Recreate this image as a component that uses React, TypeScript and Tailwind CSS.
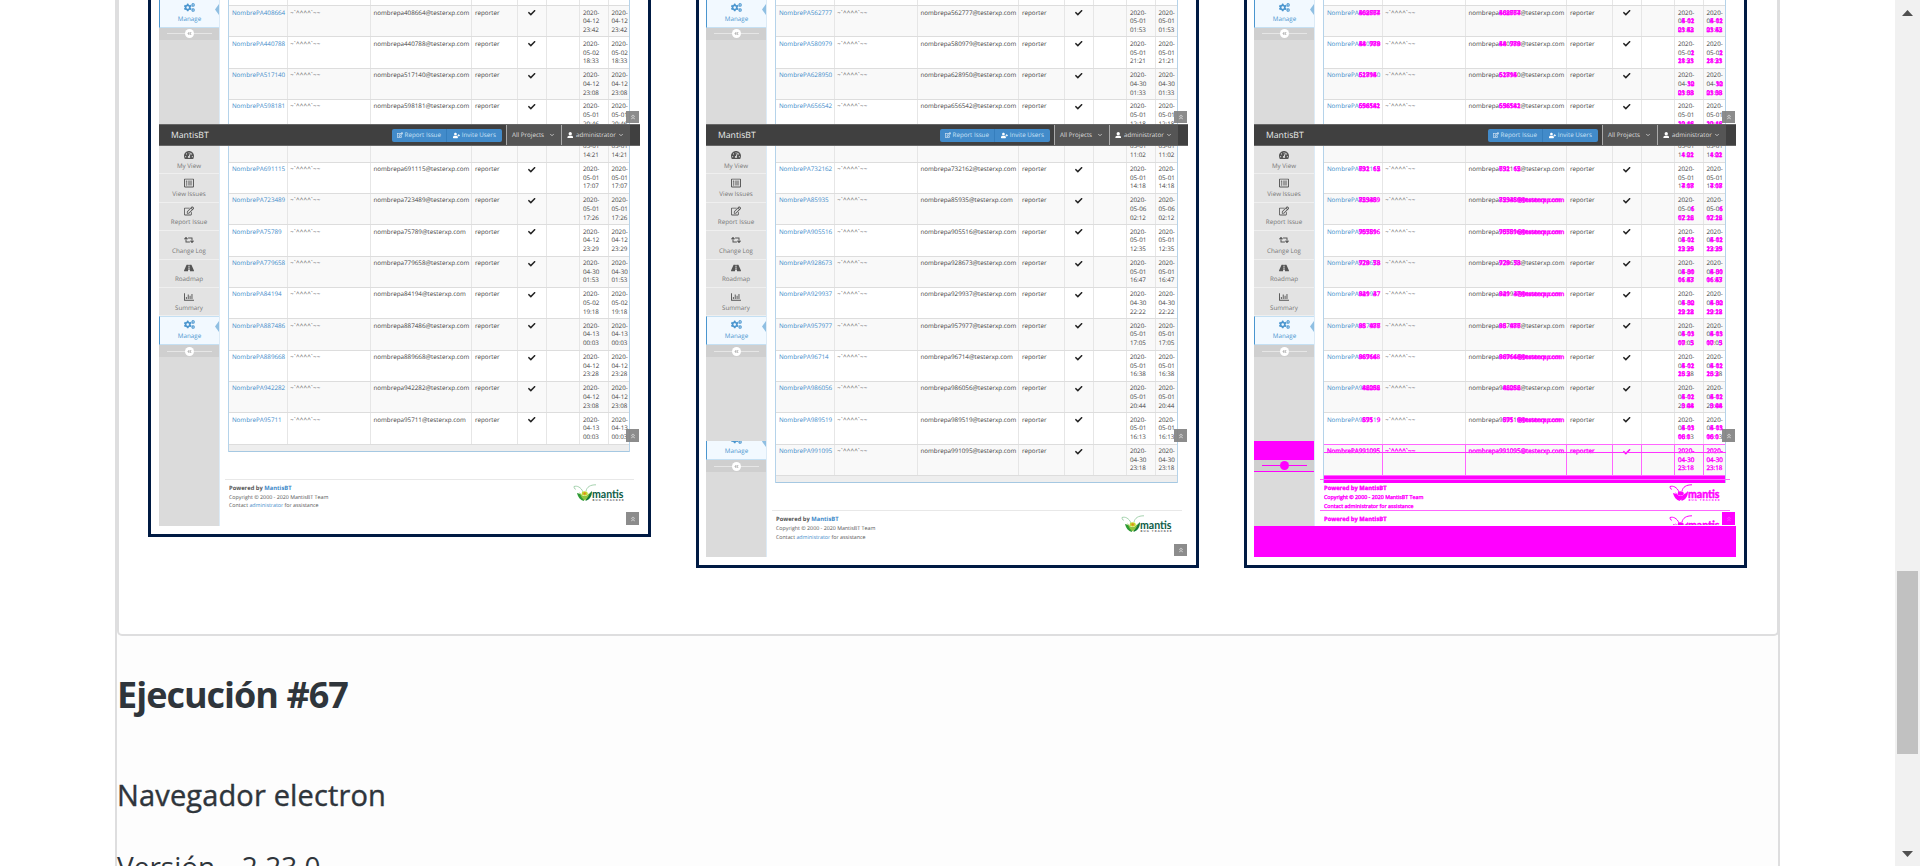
import React from "react";
import {
  FaTachometerAlt,
  FaRegListAlt,
  FaRegEdit,
  FaRetweet,
  FaRoad,
  FaRegChartBar,
  FaCogs,
  FaCheck,
  FaUser,
  FaUserPlus,
  FaAngleDoubleLeft,
  FaAngleDoubleUp,
} from "react-icons/fa";
import { FiChevronDown } from "react-icons/fi";

type Row = { id: string; day: string; time: string };

const r = (id: string, day: string, time: string): Row => ({ id, day, time });

const baseline: Row[] = [
  r("408664", "04-12", "23:42"),
  r("440788", "05-02", "18:33"),
  r("517140", "04-12", "23:08"),
  r("598181", "05-01", "20:46"),
  r("", "05-01", "14:21"),
  r("691115", "05-01", "17:07"),
  r("723489", "05-01", "17:26"),
  r("75789", "04-12", "23:29"),
  r("779658", "04-30", "01:53"),
  r("84194", "05-02", "19:18"),
  r("887486", "04-13", "00:03"),
  r("889668", "04-12", "23:28"),
  r("942282", "04-12", "23:08"),
  r("95711", "04-13", "00:03"),
];

const current: Row[] = [
  r("562777", "05-01", "01:53"),
  r("580979", "05-01", "21:21"),
  r("628950", "04-30", "01:33"),
  r("656542", "05-01", "12:18"),
  r("", "05-01", "11:02"),
  r("732162", "05-01", "14:18"),
  r("85935", "05-06", "02:12"),
  r("905516", "05-01", "12:35"),
  r("928673", "05-01", "16:47"),
  r("929937", "04-30", "22:22"),
  r("957977", "05-01", "17:05"),
  r("96714", "05-01", "16:38"),
  r("986056", "05-01", "20:44"),
  r("989519", "05-01", "16:13"),
  r("991095", "04-30", "23:18"),
];

const changedText = "text-[#ff00ff] [-webkit-text-stroke:0.35px_#ff00ff]";

/* Prints `b`; where `a` differs, both strings are printed in magenta on top of each other. */
function Diff({ a, b }: { a?: string; b: string }) {
  if (a === undefined || a === b) return <>{b}</>;
  const runs: { same: boolean; a: string; b: string }[] = [];
  const n = Math.max(a.length, b.length);
  for (let i = 0; i < n; i++) {
    const ca = a[i] ?? "";
    const cb = b[i] ?? "";
    const same = ca === cb;
    const last = runs[runs.length - 1];
    if (last && last.same === same) {
      last.a += ca;
      last.b += cb;
    } else runs.push({ same, a: ca, b: cb });
  }
  return (
    <>
      {runs.map((run, i) =>
        run.same ? (
          <span key={i}>{run.b}</span>
        ) : (
          <span key={i} className={"relative inline-block " + changedText}>
            {run.b}
            <span aria-hidden className="absolute left-0 top-0">
              {run.a}
            </span>
          </span>
        )
      )}
    </>
  );
}

function UserRow({ row, other, shade, added }: { row: Row; other?: Row; shade: boolean; added?: boolean }) {
  const cell = "border-r pt-[2.5px] " + (added ? "border-[#ff66ff] " : "border-[#e6e6e6] ");
  const dates = (
    <>
      <div>{row.id ? "2020-" : "\u00a0"}</div>
      <div>
        <Diff a={other?.day} b={row.day} />
      </div>
      <div>
        <Diff a={other?.time} b={row.time} />
      </div>
    </>
  );
  return (
    <div
      className={
        "grid h-[31.33px] shrink-0 grid-cols-[58.3px_83.8px_101px_45.7px_29px_33.3px_29px_1fr] overflow-hidden whitespace-nowrap border-t " +
        (shade ? "bg-[#f9f9f9] " : "bg-white ") +
        (added ? "border-[#ff66ff] " + changedText : "border-[#dddddd] text-[#444]")
      }
    >
      <div className={cell + "pl-[2.5px]" + (added ? "" : " text-[#428bca]")}>
        {row.id && <Diff a={other && "NombrePA" + other.id} b={"NombrePA" + row.id} />}
      </div>
      <div className={cell + "pl-[2.5px] tracking-[0.2px]"}>{row.id && "~`^^^^`~~"}</div>
      <div className={cell + "pl-[2px]"}>
        {row.id && (
          <Diff a={other && "nombrepa" + other.id + "@testerxp.com"} b={"nombrepa" + row.id + "@testerxp.com"} />
        )}
      </div>
      <div className={cell + "pl-[2.5px]"}>{row.id && "reporter"}</div>
      <div className={cell + "flex items-start justify-center pt-[3px]"}>
        {row.id && <FaCheck className={"size-[7.5px] " + (added ? "text-[#ff00ff]" : "text-[#222]")} />}
      </div>
      <div className={cell} />
      <div className={cell + "pl-[2.5px]"}>{dates}</div>
      <div className="pl-[2px] pt-[2.5px]">{dates}</div>
    </div>
  );
}

function Manage() {
  return (
    <div className="relative flex h-[28.5px] shrink-0 flex-col items-center overflow-hidden border-y border-l border-y-[#c5e0f3] border-l-[#4b96cf] bg-[#f2f9ff] pt-[2px] text-[#4b96cf]">
      <FaCogs className="size-[11px]" />
      <span className="mt-[1.5px]">Manage</span>
      <svg className="absolute right-0 top-[4px] h-[11px] w-[4px]" viewBox="0 0 4 11">
        <path d="M4 0 L0 5.5 L4 11 Z" fill="#8fbfe2" />
      </svg>
    </div>
  );
}

function Collapse({ changed }: { changed?: boolean }) {
  return (
    <div
      className={
        "flex h-[12.5px] shrink-0 items-center justify-center bg-[#cfcfcf] " +
        (changed ? "border-b border-[#ff00ff] text-[#ff00ff]" : "text-[#aaa]")
      }
    >
      <span className={"h-px w-[18px] " + (changed ? "bg-[#ff00ff]" : "bg-[#e6e6e6]")} />
      <span className={"flex size-[9px] items-center justify-center rounded-full " + (changed ? "bg-[#ff00ff]" : "bg-white")}>
        <FaAngleDoubleLeft className="size-[5px]" />
      </span>
      <span className={"h-px w-[18px] " + (changed ? "bg-[#ff00ff]" : "bg-[#e6e6e6]")} />
    </div>
  );
}

const menu = [
  { label: "My View", Icon: FaTachometerAlt },
  { label: "View Issues", Icon: FaRegListAlt },
  { label: "Report Issue", Icon: FaRegEdit },
  { label: "Change Log", Icon: FaRetweet },
  { label: "Roadmap", Icon: FaRoad },
  { label: "Summary", Icon: FaRegChartBar },
];

function Sidebar({ tail }: { tail?: "repeat" | "changed" }) {
  return (
    <div className="flex w-[61px] shrink-0 flex-col overflow-hidden border-r border-[#dcebf7] bg-[#dbdbdb] text-[6.25px] leading-[8.67px]">
      <div className="-mt-[1px] flex h-[147px] shrink-0 flex-col">
        <Manage />
        <Collapse />
      </div>
      {menu.map(({ label, Icon }) => (
        <div
          key={label}
          className="flex h-[28.4px] shrink-0 flex-col items-center border-b border-[#efefef] bg-[#e3e3e3] pt-[3.7px] text-[#777]"
        >
          <Icon className="size-[10px] text-[#555]" />
          <span className="mt-[2px]">{label}</span>
        </div>
      ))}
      <Manage />
      <Collapse />
      {tail === "repeat" && (
        <div className="mt-[84px] flex h-[31px] shrink-0 flex-col justify-end overflow-hidden">
          <Manage />
          <Collapse />
        </div>
      )}
      {tail === "changed" && (
        <div className="mt-[84px] flex flex-col">
          <div className="h-[18.5px] bg-[#ff00ff]" />
          <Collapse changed />
        </div>
      )}
    </div>
  );
}

function Navbar() {
  return (
    <div className="absolute inset-x-0 top-[124px] flex h-[22px] items-stretch whitespace-nowrap border-y border-[#666] bg-[#404040] pl-[12px] text-[6.25px] text-[#ddd]">
      <span className="flex-1 text-[8.67px] leading-[20px] text-[#eee]">MantisBT</span>
      <div className="my-[3.5px] flex w-[110px] overflow-hidden rounded-[2px] bg-[#428bca] text-[#c9e2f6]">
        <span className="flex flex-1 items-center justify-center gap-[2px] border-r border-[#357ebd]">
          <FaRegEdit className="size-[6px] text-white" />
          Report Issue
        </span>
        <span className="flex flex-1 items-center justify-center gap-[2px]">
          <FaUserPlus className="size-[7px] text-white" />
          Invite Users
        </span>
      </div>
      <div className="ml-[4px] flex w-[55px] items-center justify-between border-l border-[#aaa] bg-[#555] pl-[5.5px] pr-[6px]">
        All Projects
        <FiChevronDown className="size-[6px]" strokeWidth={3} />
      </div>
      <div className="flex w-[69px] items-center border-l border-[#aaa] bg-[#555] pl-[5px]">
        <FaUser className="mr-[3px] size-[6.5px] text-white" />
        administrator
        <FiChevronDown className="ml-[2px] size-[6px]" strokeWidth={3} />
      </div>
      <span className="w-[10.5px]" />
    </div>
  );
}

function UpButton({ place, changed }: { place: string; changed?: boolean }) {
  return (
    <div
      className={
        "absolute right-[1px] flex h-[12.3px] w-[13px] items-center justify-center " +
        (changed ? "bg-[#ff00ff] text-[#ff33ff] " : "bg-[#808080]/90 text-[#ccc] ") +
        place
      }
    >
      <FaAngleDoubleUp className="size-[6px]" />
    </div>
  );
}

function Logo({ changed }: { changed?: boolean }) {
  const m = "#ff00ff";
  return (
    <svg className="h-[18px] w-[52px] shrink-0" viewBox="0 0 52 18">
      <g fill="none" strokeWidth={changed ? 1 : 0.8} stroke={changed ? m : "#8fc79a"}>
        <path d="M10 8 C8 3 4 1.500 1 2.500 C1 4.500 2 5.500 3 5" />
        <path d="M13 7 C14 3 17 0.800 23 0.800" />
      </g>
      <path d="M4 9 C5 13 7 16 11 17 C11 13 9 10 4 9 Z" fill={changed ? m : "#2f9a35"} />
      <path d="M19 7 C16 10 13 13 12.500 17 C17 15.500 19 12 19 7 Z" fill={changed ? m : "#157a3a"} />
      <path d="M6 8 L9 14 L12 16.500 L15 13 L17 8.500 L13 12 L10 12 Z" fill={changed ? m : "#8cc63f"} />
      <ellipse cx="11.700" cy="9.500" rx="3" ry="2.200" fill={changed ? m : "#c3d82d"} />
      <circle cx="11.700" cy="9.500" r="1.200" fill={changed ? m : "#e08a1e"} />
      <text
        x="19"
        y="14"
        fontFamily="Lato, sans-serif"
        fontWeight="700"
        fontSize="11.500"
        textLength="31.500"
        lengthAdjust="spacingAndGlyphs"
        stroke={changed ? m : "none"}
        strokeWidth="0.500"
        fill={changed ? m : "#0d5c46"}
      >
        mantis
      </text>
      <text x="19.500" y="16.800" fontFamily="Lato, sans-serif" fontWeight="900" fontSize="2.800" textLength="31" fill={changed ? m : "#555"}>
        BUG TRACKER
      </text>
    </svg>
  );
}

function Footer({ changed, short }: { changed?: boolean; short?: boolean }) {
  const link = changed ? "" : "text-[#428bca]";
  return (
    <div
      className={
        "ml-[5px] mr-[6px] flex shrink-0 justify-between overflow-hidden border-t pl-[4px] pr-[9px] leading-[8.8px] " +
        (short ? "h-[15px] " : "h-[31px] ") +
        (changed ? "border-[#ff66ff] " + changedText : "border-[#e8e8e8] text-[#555]")
      }
    >
      <div className="pt-[3.7px] text-[5.3px]">
        <div className="text-[5.8px] font-bold">
          Powered by <span className={link}>MantisBT</span>
        </div>
        {!short && (
          <>
            <div>Copyright © 2000 - 2020 MantisBT Team</div>
            <div>
              Contact <span className={link}>administrator</span> for assistance
            </div>
          </>
        )}
      </div>
      <div className="pt-[4px]">
        <Logo changed={changed} />
      </div>
    </div>
  );
}

type Kind = "baseline" | "current" | "diff";

function Capture({ kind }: { kind: Kind }) {
  const rows = kind === "baseline" ? baseline : current;
  const diff = kind === "diff";
  return (
    <div
      className={
        "shrink-0 border-x-[3px] border-b-[3px] border-[#001a43] bg-white pr-[8px] [text-rendering:geometricPrecision] " +
        (kind === "baseline" ? "h-[537px] w-[503px] pl-[8px]" : "h-[568px] w-[503px] pl-[7px]")
      }
    >
      <div className={"relative flex overflow-hidden " + (kind === "baseline" ? "h-[526px]" : "h-[557px]")}>
        <Sidebar tail={kind === "current" ? "repeat" : diff ? "changed" : undefined} />
        <div className="flex min-w-0 flex-1 flex-col text-[6.25px] leading-[8.67px]">
          <div className="ml-[8.4px] mr-[10px] flex shrink-0 flex-col border-x border-[#b5d3ea]">
            <div className="grid h-[5px] grid-cols-[58.3px_83.8px_101px_45.7px_29px_33.3px_29px_1fr]">
              {Array.from({ length: 7 }, (_, i) => (
                <span key={i} className="border-r border-[#e6e6e6]" />
              ))}
            </div>
            {rows.map((row, i) => (
              <UserRow
                key={i}
                row={row}
                other={diff ? baseline[i] : undefined}
                added={diff && i === rows.length - 1}
                shade={i % 2 === 0}
              />
            ))}
            {diff ? (
              <div className="h-[8.500px] border-t border-[#ff66ff] bg-[#ff00ff]" />
            ) : (
              <div className="h-[8.500px] border-b border-t border-b-[#a5c8e2] border-t-[#ddd] bg-[#eeeeee]" />
            )}
          </div>
          {diff ? (
            <div className="-mt-[4px] flex flex-col">
              <Footer changed />
              <Footer changed short />
            </div>
          ) : (
            <div className="mt-[27px] flex flex-col">
              <Footer />
            </div>
          )}
        </div>
        {diff && <div className="absolute left-[70px] right-[10px] top-[452px] h-px bg-[#ff33ff]" />}
        {diff && <div className="absolute inset-x-0 bottom-0 h-[31px] bg-[#ff00ff]" />}
        <UpButton place="top-[111px]" />
        <UpButton place="top-[429.400px]" />
        <UpButton place={kind === "current" ? "top-[544px]" : "top-[512.400px]"} changed={diff} />
        <Navbar />
      </div>
    </div>
  );
}

function Scrollbar() {
  return (
    <div className="flex w-[25px] shrink-0 flex-col items-center bg-[#f1f1f1]">
      <svg className="mt-[10px] h-[6px] w-[11px]" viewBox="0 0 11 6">
        <path d="M5.500 0 L11 6 L0 6 Z" fill="#505050" />
      </svg>
      <div className="mt-[555px] h-[183px] w-[21px] bg-[#c1c1c1]" />
      <svg className="mt-[97px] h-[6px] w-[11px]" viewBox="0 0 11 6">
        <path d="M0 0 L11 0 L5.500 6 Z" fill="#505050" />
      </svg>
    </div>
  );
}

export default function App() {
  return (
    <div className="flex h-[866px] w-[1920px] overflow-hidden bg-white font-['Open_Sans','Noto_Sans',sans-serif]">
      <div className="flex min-w-0 flex-1 pl-[115px]">
        <main className="w-[1665px] border-x-2 border-[#dededf] bg-[#fdfdfd] text-[#2f353b]">
          <section className="-mr-px h-[636px] rounded-b-[5px] border-x-2 border-b-2 border-[#dededf] bg-white pl-[29px]">
            <div className="flex items-start gap-[45px]">
              <Capture kind="baseline" />
              <Capture kind="current" />
              <Capture kind="diff" />
            </div>
          </section>
          <h1 className="mt-[34px] whitespace-nowrap text-[36px] font-bold leading-[50px] tracking-[-1px]">Ejecución #67</h1>
          <h2 className="mt-[53px] whitespace-nowrap text-[29px] font-medium leading-[44px] tracking-[0.15px] [-webkit-text-stroke:0.4px_#2f353b]">
            Navegador electron
          </h2>
          <p className="mt-[29px] whitespace-nowrap text-[28px] leading-[40px] [word-spacing:1.5px]">Versión - 2.23.0</p>
        </main>
      </div>
      <Scrollbar />
    </div>
  );
}
